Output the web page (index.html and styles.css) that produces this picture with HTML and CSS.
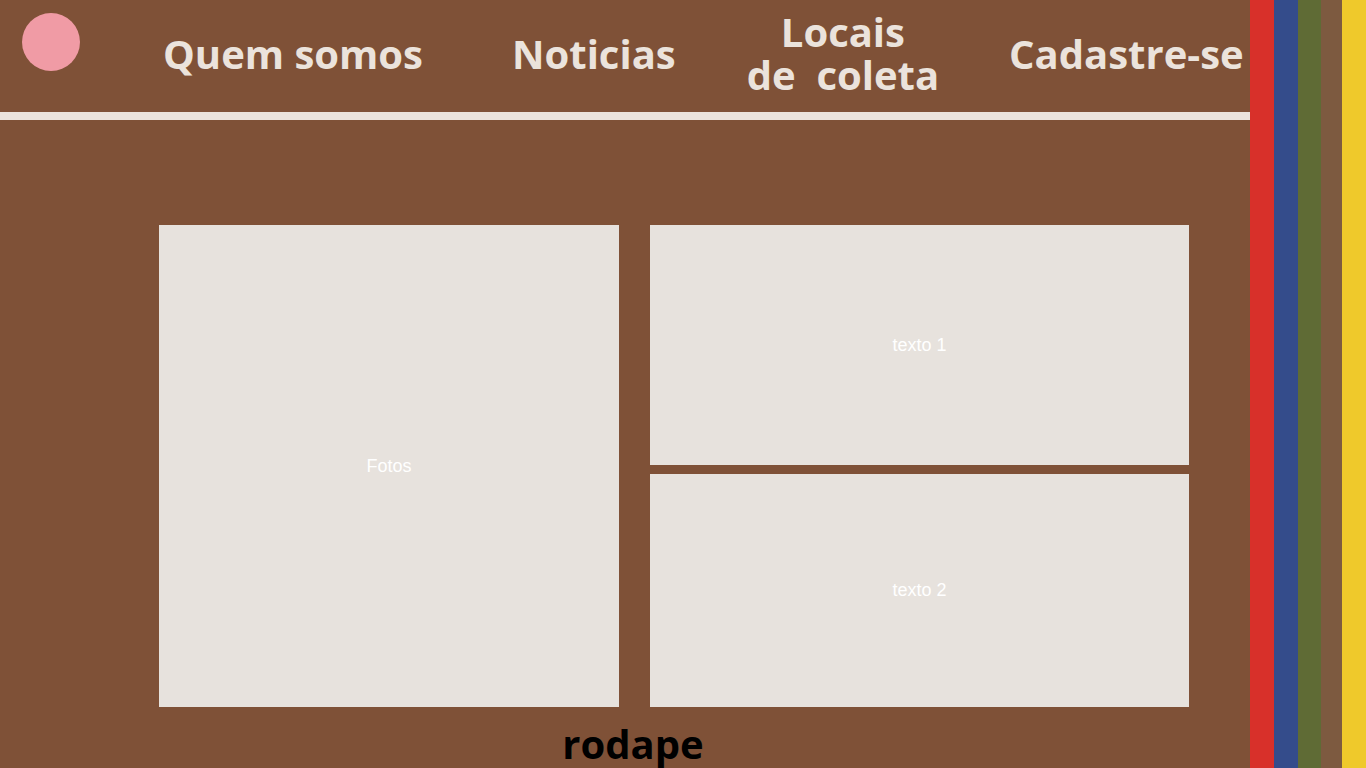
FILE: index.html
```html
<!DOCTYPE html>
<html lang="pt-BR">
  <head>
    <meta charset="UTF-8" />
    <meta name="viewport" content="width=device-width, initial-scale=1.0" />
    <title>Coleta</title>
    <link rel="stylesheet" href="styles.css">
  </head>
  <body>
    <div class="pagina">
      <div class="principal">
        <div class="topo">
          <div class="logo"></div>
          <a class="menu menu-quem" href="#">Quem somos</a>
          <a class="menu menu-noticias" href="#">Noticias</a>
          <a class="menu menu-locais" href="#">Locais<br />de&nbsp; coleta</a>
          <a class="menu menu-cadastro" href="#">Cadastre-se</a>
        </div>
        <div class="linha"></div>

        <div class="conteudo">
          <div class="caixa fotos">Fotos</div>
          <div class="caixa texto1">texto 1</div>
          <div class="caixa texto2">texto 2</div>
        </div>

        <div class="rodape">rodape</div>
      </div>

      <!-- faixas coloridas -->
      <div class="faixas">
        <div class="faixa vermelha"></div>
        <div class="faixa azul"></div>
        <div class="faixa verde"></div>
        <div class="faixa marrom"></div>
        <div class="faixa amarela"></div>
      </div>
    </div>
  </body>
</html>
```

FILE: styles.css
```css
html {
  background-color: #7f5137;
  height: 100%;
}
body {
  margin: 0;
  height: 100%;
  overflow: hidden;
  font-family: "Open Sans", "Liberation Sans", sans-serif;
}
.pagina {
  display: flex;
  height: 768px;
}
.principal {
  width: 1250px;
  display: flex;
  flex-direction: column;
}
.principal > div {
  flex-shrink: 0; /* nao deixa o topo encolher */
}

/* menu do topo */
.topo {
  display: flex;
  align-items: center;
  height: 112px;
  padding-left: 22px;
}
.logo {
  align-self: flex-start;
  margin-top: 13px;
  width: 58px;
  height: 58px;
  border-radius: 50%;
  background-color: #f09ba5;
}
.menu {
  color: #ebe3dc;
  font-size: 40px;
  font-weight: 700;
  text-decoration: none;
  white-space: nowrap;
  margin-top: -6px;
}
.menu-quem {
  margin-left: 83px;
}
.menu-noticias {
  margin-left: 89px;
}
.menu-locais {
  margin-left: 71px;
  text-align: center;
  line-height: 43px;
  margin-top: -6px;
}
.menu-cadastro {
  margin-left: 70px;
}
.linha {
  height: 8px;
  background-color: #ebe3dc;
}

/* caixas */
.conteudo {
  display: grid;
  grid-template-columns: 460px 539px;
  grid-template-rows: 240px 233px;
  column-gap: 31px;
  row-gap: 9px;
  margin: 105px 0 0 159px;
}
.caixa {
  background-color: #e7e2dd;
  color: #fff;
  font-family: "Liberation Sans", Arial, sans-serif;
  font-size: 18px;
  display: flex;
  align-items: center;
  justify-content: center;
}
.fotos {
  grid-row: 1 / 3;
}

.rodape {
  margin-top: 9px;
  padding-left: 16px;
  text-align: center;
  font-size: 40px;
  font-weight: 700;
  color: #000;
}

/* faixas da direita */
.faixas {
  display: flex;
  height: 768px;
}
.faixa {
  height: 100%;
}
.vermelha {
  width: 24px;
  background-color: #d8302a;
}
.azul {
  width: 24px;
  background-color: #344c8b;
}
.verde {
  width: 23px;
  background-color: #5f6b35;
}
.marrom {
  width: 21px;
  background-color: #7d5a40;
}
.amarela {
  width: 24px;
  background-color: #efc92b;
}
```
